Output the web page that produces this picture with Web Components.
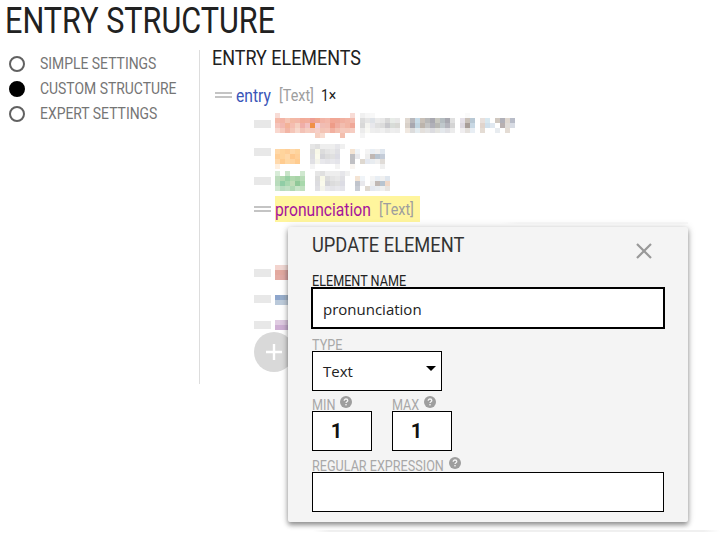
<!DOCTYPE html>
<html>
<head>
<meta charset="utf-8">
<title>Entry structure</title>
<style>
  html, body { margin: 0; padding: 0; background: #fff; }
  body { font-family: Roboto, "Liberation Sans", sans-serif; width: 728px; height: 535px; overflow: hidden; }
</style>
</head>
<body>
<entry-page></entry-page>

<script>
// condensed headings: Roboto Condensed isn't installed, so squeeze Roboto
class NarrowText extends HTMLElement {
  constructor() {
    super();
    this.attachShadow({ mode: 'open' });
    this.shadowRoot.innerHTML = `
      <style>
        :host { display: inline-block; white-space: nowrap; }
        span { display: inline-block; transform: scaleX(var(--squeeze, .87)); transform-origin: 0 50%; margin-right: calc((var(--squeeze, .87) - 1) * var(--w, 0px)); }
      </style>
      <span><slot></slot></span>
    `;
  }
  connectedCallback() {
    const span = this.shadowRoot.querySelector('span');
    span.style.setProperty('--w', span.offsetWidth + 'px');
  }
}
customElements.define('narrow-text', NarrowText);

class RadioItem extends HTMLElement {
  constructor() {
    super();
    this.attachShadow({ mode: 'open' });
    const on = this.hasAttribute('checked');
    this.shadowRoot.innerHTML = `
      <style>
        :host { display: flex; align-items: center; height: 25px; color: #757575; font-size: 16px; }
        i { box-sizing: border-box; width: 16px; height: 16px; border-radius: 50%; border: 2px solid #616161; margin: 0 15px 0 9px; background: #fff; }
        i.on { background: #000; border-color: #000; }
      </style>
      <i class="${on ? 'on' : ''}"></i><narrow-text><slot></slot></narrow-text>
    `;
  }
}
customElements.define('radio-item', RadioItem);

// draws a blurred, pixelated stretch of the reference as colour blocks
class MosaicBlock extends HTMLElement {
  constructor() {
    super();
    this.attachShadow({ mode: 'open' });
    const cells = (this.getAttribute('cells') || '').trim().split(/\s+/);
    const size = 5;
    const cols = Math.max(...cells.map(r => r.split(',').length));
    let rects = '';
    cells.forEach((row, y) => row.split(',').forEach((c, x) => {
      if (c && c !== '-') rects += `<rect x="${x * size}" y="${y * size}" width="${size}" height="${size}" fill="#${c}"/>`;
    }));
    this.shadowRoot.innerHTML = `
      <style>:host { display: block; line-height: 0; } svg { display: block; }</style>
      <svg width="${cols * size}" height="${cells.length * size}" shape-rendering="crispEdges">${rects}</svg>
    `;
  }
}
customElements.define('mosaic-block', MosaicBlock);

class TreeRow extends HTMLElement {
  constructor() {
    super();
    this.attachShadow({ mode: 'open' });
    this.shadowRoot.innerHTML = `
      <style>
        :host { display: flex; align-items: center; height: var(--row, 28.5px); padding-left: var(--indent, 3px); font-size: 18px; }
        .grip { box-sizing: border-box; width: 17px; height: 6px; border-top: 2px solid #c4c4c4; border-bottom: 2px solid #c4c4c4; margin-right: 4px; flex: none; }
        :host([soft]) .grip { height: 8px; border: 0; background: #e8e8e8; }
      </style>
      <div class="grip"></div><slot></slot>
    `;
  }
}
customElements.define('tree-row', TreeRow);

class EntryTree extends HTMLElement {
  constructor() {
    super();
    this.attachShadow({ mode: 'open' });
    this.shadowRoot.innerHTML = `
      <style>
        :host { display: block; padding-top: 15px; }
        .name { color: #3a55b8; }
        .type { color: #9e9e9e; margin-left: 8px; font-size: 16.5px; }
        .times { color: #212121; margin-left: 7px; font-size: 16px; }
        .kids { --indent: 42px; display: block; }
        .hl { display: flex; align-items: center; background: #fff59d; height: 26px; padding-right: 6px; }
        .hl .name { color: #a6139c; }
        .gap { height: 36px; }
        .low { --row: 26px; }
        .add { width: 40px; height: 40px; border-radius: 50%; background: #d9d9d9; margin: -6px 0 0 42px; display: flex; align-items: center; justify-content: center; }
        .m1 { margin-top: 4px; }
        .m2 { margin-top: 9px; }
        .m3 { margin-top: 3px; }
      </style>
      <tree-row><narrow-text class="name">entry</narrow-text><narrow-text class="type">[Text]</narrow-text><narrow-text class="times">1×</narrow-text></tree-row>
      <div class="kids">
        <tree-row soft><mosaic-block class="m1" cells="
          f8dcd6,-,-,-,-,-,-,-,-,-,-,-,-,-,-,f8dcd6,-,f0f0f0,f6f6f6,f8f8f8,-,-,-,-,-,-,-,-,-,-,-,-,-,-,-,-,-,-,fafafa,-,-,-,-,-,-,-,-,-
          f5b9a8,f3b4a6,f5c5b4,f3b9a4,f3b7a8,f2ab98,f2ad9c,ee9e94,f0a890,f2b3a5,f3b8aa,f2a694,efa897,f1b0a0,f2b5a5,f3bbae,-,dcdcdc,e6e6e6,dfe3e8,ececec,e8e8e8,d8d8d8,e8ece8,e8e8e8,-,e0d8d0,b8b8bc,c8dce8,c8c0b8,b8b8b8,a8a8b0,c8c8c0,b4bcc0,a8a8b0,e0e0e0,-,e4e0e8,c8c0b8,b8c8d4,-,e8e0dc,d8e8f0,-,d0c8c0,b0b0b8,e0d8d0,b8bcc8
          f5c4bb,f2b8b0,f3b298,f5bdb0,f5cfc0,f0aea8,f2c0c0,f09048,f2cfdc,f0bdb4,f2bcb0,ee9c88,f0ada0,f2bdaf,f2b5a4,f0a898,-,d8d8d8,f4f4f0,e8e8ec,e0e0e0,dcdcdc,c8c8cc,d8dcd8,d8d8d4,-,d8d0c8,a8a8b0,c0d4e0,bcb4ac,c4c4c4,b0b0b8,b8b8b4,c0c8cc,b4b4bc,d4d4d4,-,dcd8e0,a89e98,c8d8e4,-,e0d4cc,d0e0ec,e0e8f0,-,b8b0b0,e0dcd8,d8dce4
          f9d8cf,f6c9bd,f2b5a5,f5c6b8,f8d8cc,f3c2b6,f6cdc0,f5c8bc,f5cfc8,f3c4b5,f5c5b8,f2b0a0,f3c0b0,f5c9bc,f5c8ba,f6cdc2,-,ececec,f8f8f4,eeeeee,ececec,f0f0f0,e8e8e8,eeeeee,ececec,-,f0e8e0,dcdcdc,e4ecf0,e4e0dc,e4e4e4,dcdce0,e4e4e0,e4e8ec,e0e0e4,ececec,-,f0eef0,e4e0dc,e8eef4,-,e4dcd4,-,-,e8ecf0,-,e4dcd4,-
          -,-,-,-,-,-,-,-,f6cfc0,f8dcd0,-,-,-,f3bfae,-,-,-,f4f4f4,-,-,-,-,-,-,-,-,-,-,-,-,-,-,-,-,-,-,-,-,-,-,-,-,-,-,-,-,-,-
        "></mosaic-block></tree-row>
        <tree-row soft><mosaic-block class="m2" cells="
          -,-,-,-,-,-,-,e6e6e6,e0e0e0,eeeeee,eeeeee,eeeeee,e6e6ea,f0f0f0,-,-,-,-,-,-,-,-
          ffd8a8,ffd49c,ffcf98,ffd8a8,ffd49c,-,-,dcdcdc,f8f8e8,dcdcdc,e4e4e4,e8e8e8,e0e0e4,-,-,f4e4d4,f0f4f8,-,f4f4f4,e8eef4,f0f0f0,dfe6ee
          ffcf98,ffd49c,ffd8a8,ffc88c,ffcf98,-,-,dcdce0,fafaec,d4d4d8,dcdcdc,e0e0e0,dcdce4,-,-,c0c0c4,e8e8ec,-,eeeeee,c0b8b4,b8c4d0,c4ccd8
          ffd9ac,ffcc90,ffd8a4,ffd4a0,ffcc90,-,-,e0e0e4,f4f4ec,e8e8ec,e4e4e8,e8e8ec,e4e4ea,-,-,c0c0c4,-,ded8d0,e4e8f0,e8ecf0,f0f0f0,e0dcd8
          fff0e0,-,-,-,-,-,-,f4f4f4,-,-,-,-,f4f4f4,-,-,f8f4f0,-,-,-,-,-,f0f0f0
        "></mosaic-block></tree-row>
        <tree-row soft><mosaic-block cells="
          d8ecd8,-,c8e4c8,-,-,d0e8d0,-,-,e6e6e6,e0e0e0,eeeeee,eeeeee,eeeeee,e6e6ea,f0f0f0,-,-,-,-,-,-,-,-
          bcdcbc,b0d8b0,98d0a4,b0d8ae,a8d4a8,b8dcb8,-,-,dcdcdc,f8f8e8,dcdcdc,e4e4e4,e8e8e8,e0e0e4,-,-,f4e4d4,f0f4f8,-,f4f4f4,e8eef4,f0f0f0,dfe6ee
          b8dcbc,90cda6,a8d8b0,c0dcb8,90c898,a8d8ac,-,-,dcdce0,fafaec,d4d4d8,dcdcdc,e0e0e0,dcdce4,-,-,c0c4cc,e8e8ec,-,eeeeee,c0b8b4,b8c4d0,f0d8c8
          cfe8d0,b8dcc0,c0e0c4,b0d8b4,c8e4c8,c0e0c0,-,-,e0e0e4,f4f4ec,e8e8ec,e4e4e8,e8e8ec,e4e4ea,-,-,c8ccd4,-,ded8d0,e4e8f0,e8ecf0,f0f0f0,e8e4e0
        "></mosaic-block></tree-row>
        <tree-row><div class="hl"><narrow-text class="name">pronunciation</narrow-text><narrow-text class="type">[Text]</narrow-text></div></tree-row>
        <div class="gap"></div>
        <div class="low">
          <tree-row soft><mosaic-block cells="f3d4ce,f0d8d4,f0d8d4 e3a89e,e0a8a0,d9a5a3 e4aca4,e0aaa6,d8a4a4"></mosaic-block></tree-row>
          <tree-row soft><mosaic-block class="m3" cells="8ea6cc,98aecb,a4b5c8 bac9da,bdcbda,c2cedb"></mosaic-block></tree-row>
          <tree-row soft><mosaic-block cells="e0cce2,dcc8df,d8c4dc cfafd4,ccaed2,c8aed0"></mosaic-block></tree-row>
        </div>
        <div class="add"><svg width="18" height="18" viewBox="0 0 18 18"><path d="M9 1v16M1 9h16" stroke="#fff" stroke-width="2.4" fill="none"/></svg></div>
      </div>
    `;
  }
}
customElements.define('entry-tree', EntryTree);

class HelpDot extends HTMLElement {
  constructor() {
    super();
    this.attachShadow({ mode: 'open' });
    this.shadowRoot.innerHTML = `
      <style>
        :host { display: block; width: 12px; height: 12px; margin: 0 0 6px 5px; line-height: 0; }
      </style>
      <svg width="12" height="12" viewBox="0 0 12 12"><circle cx="6" cy="6" r="6" fill="#9e9e9e"/><path d="M4.2 4.7C4.2 3.6 5 3 6 3s1.8.6 1.8 1.5c0 1.2-1.8 1.2-1.8 2.5" stroke="#f4f4f4" stroke-width="1.3" fill="none"/><rect x="5.3" y="8" width="1.4" height="1.4" fill="#f4f4f4"/></svg>
    `;
  }
}
customElements.define('help-dot', HelpDot);

class FormField extends HTMLElement {
  constructor() {
    super();
    this.attachShadow({ mode: 'open' });
    this.shadowRoot.innerHTML = `
      <style>
        :host { display: block; }
        label { display: flex; align-items: center; box-sizing: border-box; font-size: 14.5px; line-height: 15px; height: 15px; padding-top: 3px; color: var(--label, #a8a8a8); white-space: nowrap; }
      </style>
      <label><narrow-text><slot name="label"></slot></narrow-text><slot name="help"></slot></label>
      <slot></slot>
    `;
  }
}
customElements.define('form-field', FormField);

class UpdateDialog extends HTMLElement {
  constructor() {
    super();
    this.attachShadow({ mode: 'open' });
    this.shadowRoot.innerHTML = `
      <style>
        :host { position: absolute; left: 288px; top: 227px; width: 400px; height: 295px; box-sizing: border-box; background: #f4f4f4; padding: 0 24px; box-shadow: 0 3px 5px rgba(0,0,0,.4), 0 0 9px rgba(0,0,0,.14); border-radius: 2px; }
        header { display: flex; justify-content: space-between; height: 45px; align-items: flex-start; }
        h2 { margin: 6px 0 0; font-weight: 400; font-size: 21px; line-height: 25px; color: #333; }
        svg.close { margin: 16px 12px 0 0; }
        .box { box-sizing: border-box; display: block; background: #fff; border: 1px solid #000; font-family: "Open Sans", sans-serif; font-size: 15px; color: #222; }
        .name { width: 354px; height: 42px; border-width: 2px; padding: 0 10px; line-height: 40px; margin-left: -1px; }
        .type { position: relative; width: 130px; height: 40px; padding: 0 10px; line-height: 38px; }
        .type::after { content: ''; position: absolute; right: 5px; top: 14px; border: 5px solid transparent; border-top-color: #000; border-bottom: 0; }
        .pair { display: flex; gap: 20px; margin-top: 5px; }
        .num { width: 60px; height: 40px; font: 700 20px/38px Roboto, sans-serif; text-align: center; color: #111; padding-right: 11px; }
        .regex { width: 352px; height: 40px; }
        .dark { --label: #222; }
        .t { margin-top: 7px; }
        .r { margin-top: 6px; }
      </style>
      <header><h2><narrow-text>UPDATE ELEMENT</narrow-text></h2>
        <svg class="close" width="16" height="16" viewBox="0 0 16 16"><path d="M1 1l14 14M15 1L1 15" stroke="#999" stroke-width="2.2" fill="none"/></svg>
      </header>
      <form-field class="dark"><span slot="label">ELEMENT NAME</span><div class="box name">pronunciation</div></form-field>
      <form-field class="t"><span slot="label">TYPE</span><div class="box type">Text</div></form-field>
      <div class="pair">
        <form-field><span slot="label">MIN</span><help-dot slot="help"></help-dot><div class="box num">1</div></form-field>
        <form-field><span slot="label">MAX</span><help-dot slot="help"></help-dot><div class="box num">1</div></form-field>
      </div>
      <form-field class="r"><span slot="label">REGULAR EXPRESSION</span><help-dot slot="help"></help-dot><div class="box regex"></div></form-field>
    `;
  }
}
customElements.define('update-dialog', UpdateDialog);

class EntryPage extends HTMLElement {
  constructor() {
    super();
    this.attachShadow({ mode: 'open' });
    this.shadowRoot.innerHTML = `
      <style>
        :host { display: block; position: relative; height: 535px; overflow: hidden; }
        h1 { margin: 0; padding: 0 0 0 5px; font-weight: 400; font-size: 36px; line-height: 42px; height: 50px; color: #212121; --squeeze: .85; }
        .cols { display: flex; }
        nav { width: 199px; padding-top: 1px; }
        main { border-left: 1px solid #ddd; height: 334px; padding-left: 12px; flex: 1; }
        h2 { margin: 0; font-weight: 400; font-size: 20.5px; line-height: 16px; color: #212121; --squeeze: .875; }
        /* faint edges of whatever sits behind the dialog */
        .edge { position: absolute; height: 2px; }
        .edge.top { left: 500px; top: 222px; width: 188px; background: linear-gradient(to right, transparent, #f9f9f9 10%); }
        .edge.bottom { left: 313px; top: 530px; width: 407px; background: linear-gradient(to right, transparent, #f0f0f0 4%, #f0f0f0 96%, transparent); }
      </style>
      <h1><narrow-text>ENTRY STRUCTURE</narrow-text></h1>
      <div class="cols">
        <nav>
          <radio-item>SIMPLE SETTINGS</radio-item>
          <radio-item checked>CUSTOM STRUCTURE</radio-item>
          <radio-item>EXPERT SETTINGS</radio-item>
        </nav>
        <main>
          <h2><narrow-text>ENTRY ELEMENTS</narrow-text></h2>
          <entry-tree></entry-tree>
        </main>
      </div>
      <div class="edge top"></div>
      <div class="edge bottom"></div>
      <update-dialog></update-dialog>
    `;
  }
}
customElements.define('entry-page', EntryPage);
</script>
</body>
</html>
